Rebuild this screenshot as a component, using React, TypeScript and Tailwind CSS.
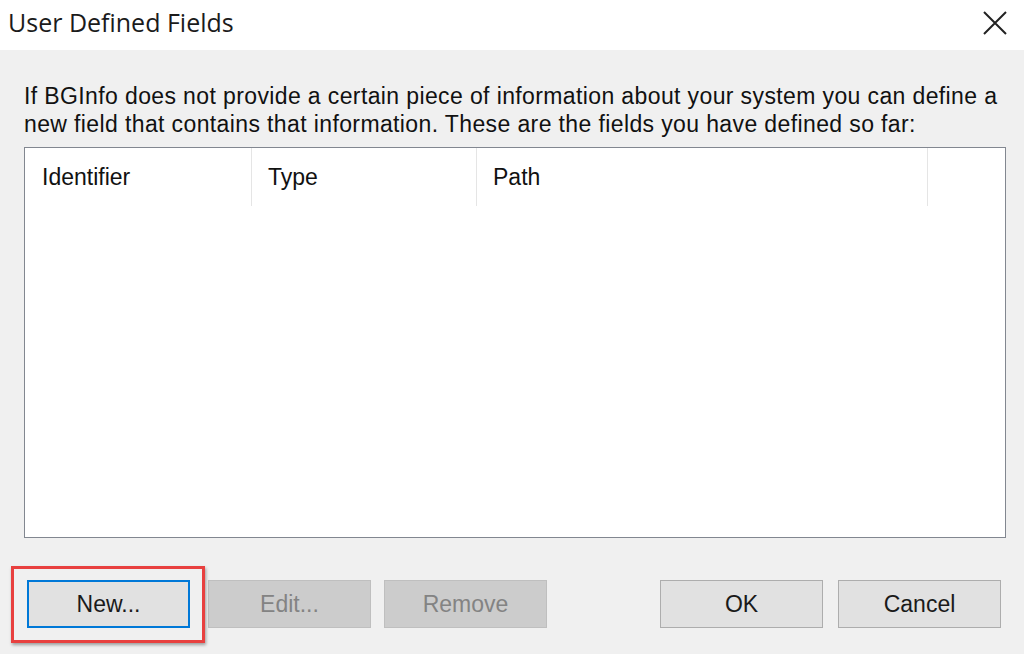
import React from 'react';

const body = { fontFamily: '"Liberation Sans", Arial, sans-serif' };

function Btn({ label, disabled, focused, className = '' }: { label: string; disabled?: boolean; focused?: boolean; className?: string }) {
  const look = focused
    ? 'border-2 border-[#0078d7] bg-[#e1e1e1] text-[#1a1a1a]'
    : disabled
      ? 'border border-[#bfbfbf] bg-[#cccccc] text-[#838383]'
      : 'border border-[#adadad] bg-[#e1e1e1] text-[#1a1a1a]';
  return (
    <button className={`h-[48px] w-[163px] text-[23px] ${look} ${className}`} style={body}>
      {label}
    </button>
  );
}

export default function App() {
  return (
    <div className="flex h-[654px] w-[1024px] flex-col overflow-hidden bg-[#f0f0f0]">
      {/* Title bar */}
      <div className="flex h-[50px] shrink-0 items-center justify-between bg-white pb-[5px] pl-[8px] pr-[17px]">
        <span className="text-[25px] text-[#1b1b1b]" style={{ fontFamily: '"Open Sans", "Noto Sans", sans-serif' }}>
          User Defined Fields
        </span>
        <svg width="24" height="24" viewBox="0 0 24 24" className="text-[#222]">
          <path d="M1 1L23 23M23 1L1 23" stroke="currentColor" strokeWidth="2" />
        </svg>
      </div>

      {/* Content */}
      <div className="flex flex-1 flex-col pl-[24px] pr-[18px] pt-[32px]" style={body}>
        <p className="whitespace-nowrap text-[23px] leading-[28px] tracking-[0.38px] text-[#111]">
          If BGInfo does not provide a certain piece of information about your system you can define a
          <br />
          new field that contains that information. These are the fields you have defined so far:
        </p>

        <div className="mt-[9px] h-[391px] border border-[#828790] bg-white">
          <div className="flex h-[58px] text-[23px] text-[#111]">
            <div className="flex w-[227px] items-center border-r border-[#e5e5e5] pl-[17px]">Identifier</div>
            <div className="flex w-[225px] items-center border-r border-[#e5e5e5] pl-[16px]">Type</div>
            <div className="flex w-[451px] items-center border-r border-[#e5e5e5] pl-[16px]">Path</div>
          </div>
        </div>

        <div className="mt-[42px] flex">
          <span className="relative ml-[3px] flex">
            <Btn label="New..." focused />
            <span className="pointer-events-none absolute -bottom-[15px] -left-[16px] -right-[15px] -top-[14px] border-[3px] border-[#e8403f] shadow-[1px_2px_3px_rgba(0,0,0,0.35)]" />
          </span>
          <Btn label="Edit..." disabled className="ml-[18px]" />
          <Btn label="Remove" disabled className="ml-[13px]" />
          <Btn label="OK" className="ml-[113px]" />
          <Btn label="Cancel" className="ml-[15px]" />
        </div>
      </div>
    </div>
  );
}
